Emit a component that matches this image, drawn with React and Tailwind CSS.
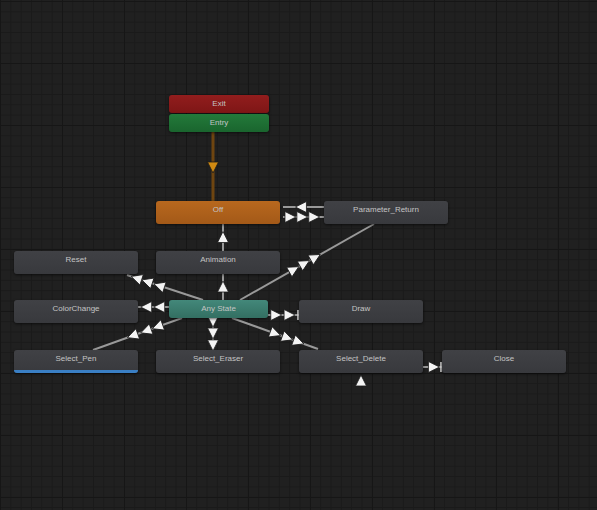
import React from 'react';

const nodes = [
  { name: 'Exit', x: 169, y: 95, w: 100, h: 18, color: 'bg-[linear-gradient(#921d1d,#7e1616)]' },
  { name: 'Entry', x: 169, y: 114, w: 100, h: 18, color: 'bg-[linear-gradient(#237a3a,#1a652e)]' },
  { name: 'Off', x: 156, y: 201, w: 124, h: 23, color: 'bg-[linear-gradient(#b8681e,#a35918)]' },
  { name: 'Parameter_Return', x: 324, y: 201, w: 124, h: 23 },
  { name: 'Reset', x: 14, y: 251, w: 124, h: 23 },
  { name: 'Animation', x: 156, y: 251, w: 124, h: 23 },
  { name: 'ColorChange', x: 14, y: 300, w: 124, h: 23 },
  { name: 'Any State', x: 169, y: 300, w: 99, h: 18, color: 'bg-[linear-gradient(#43887a,#336f62)]' },
  { name: 'Draw', x: 299, y: 300, w: 124, h: 23 },
  { name: 'Select_Pen', x: 14, y: 350, w: 124, h: 23, selected: true },
  { name: 'Select_Eraser', x: 156, y: 350, w: 124, h: 23 },
  { name: 'Select_Delete', x: 299, y: 350, w: 124, h: 23 },
  { name: 'Close', x: 442, y: 350, w: 124, h: 23 },
];

// transitions: line endpoints plus where the arrow heads sit (0..1 along the line)
const edges = [
  { a: [283, 207], b: [324, 207], heads: [0.45], reverse: true },
  { a: [283, 217], b: [324, 217], heads: [0.17, 0.46, 0.75] },
  { a: [223, 251], b: [223, 224], heads: [0.5] },
  { a: [223, 300], b: [223, 274], heads: [0.5] },
  { a: [203, 300], b: [127, 275], heads: [0.57, 0.73, 0.87] },
  { a: [169, 307], b: [138, 307], heads: [0.3, 0.72] },
  { a: [182, 318], b: [93, 350], heads: [0.27, 0.4, 0.55] },
  { a: [213, 318], b: [213, 350], heads: [0.1, 0.47, 0.84] },
  { a: [240, 300], b: [374, 224], heads: [0.4, 0.48, 0.56] },
  { a: [268, 315], b: [299, 315], heads: [0.25, 0.68], bar: true },
  { a: [232, 318], b: [318, 349], heads: [0.5, 0.64, 0.77] },
  { a: [423, 367], b: [442, 367], heads: [0.55], bar: true },
];

function Head({ x, y, angle, fill = '#f4f4f4' }) {
  return (
    <polygon
      points="6,0 -5,-5.5 -5,5.5"
      fill={fill}
      stroke="#1a1a1a"
      strokeWidth="0.8"
      transform={`translate(${x} ${y}) rotate(${angle})`}
    />
  );
}

function Edges() {
  return (
    <svg className="absolute inset-0" width="597" height="510">
      {/* entry -> default state */}
      <line x1="213" y1="132" x2="213" y2="201" stroke="#6e4510" strokeWidth="3" />
      <Head x={213} y={167} angle={90} fill="#d08a12" />

      {edges.map((e, i) => {
        const [x1, y1] = e.a;
        const [x2, y2] = e.b;
        let angle = (Math.atan2(y2 - y1, x2 - x1) * 180) / Math.PI;
        if (e.reverse) angle += 180;
        return (
          <g key={i}>
            <line x1={x1} y1={y1} x2={x2} y2={y2} stroke="#999999" strokeWidth="2" />
            {e.heads.map((t, j) => (
              <Head key={j} x={x1 + (x2 - x1) * t} y={y1 + (y2 - y1) * t} angle={angle} />
            ))}
            {e.bar && <line x1={x2 - 1} y1={y2 - 5} x2={x2 - 1} y2={y2 + 5} stroke="#e6e6e6" strokeWidth="1.5" />}
          </g>
        );
      })}

      {/* transition coming in from below the view */}
      <Head x={361} y={381} angle={-90} />
    </svg>
  );
}

function StateNode({ node }) {
  return (
    <div
      className={`absolute rounded-[3px] shadow-[0_1px_3px_rgba(0,0,0,0.6)] overflow-hidden ${
        node.color || 'bg-[linear-gradient(#404145,#38393d)]'
      }`}
      style={{ left: node.x, top: node.y, width: node.w, height: node.h }}
    >
      <div className="pt-[3px] text-center text-[8px] leading-[11px] text-[#c4c4c4]">{node.name}</div>
      {node.selected && <div className="absolute bottom-0 left-0 right-0 h-[3px] bg-[#3a7fc4]" />}
    </div>
  );
}

export default function App() {
  return (
    <div
      className="relative w-[597px] h-[510px] overflow-hidden bg-[#202020] font-['Liberation_Sans',sans-serif] bg-[linear-gradient(#161616_1px,transparent_1px),linear-gradient(90deg,#161616_1px,transparent_1px),linear-gradient(#1a1a1a_1px,transparent_1px),linear-gradient(90deg,#1a1a1a_1px,transparent_1px)] bg-[size:62px_62px,62px_62px,10.33px_10.33px,10.33px_10.33px] bg-[position:0_1px,0_0,0_1px,0_0]"
    >
      <Edges />
      {nodes.map((n) => (
        <StateNode key={n.name} node={n} />
      ))}
    </div>
  );
}
